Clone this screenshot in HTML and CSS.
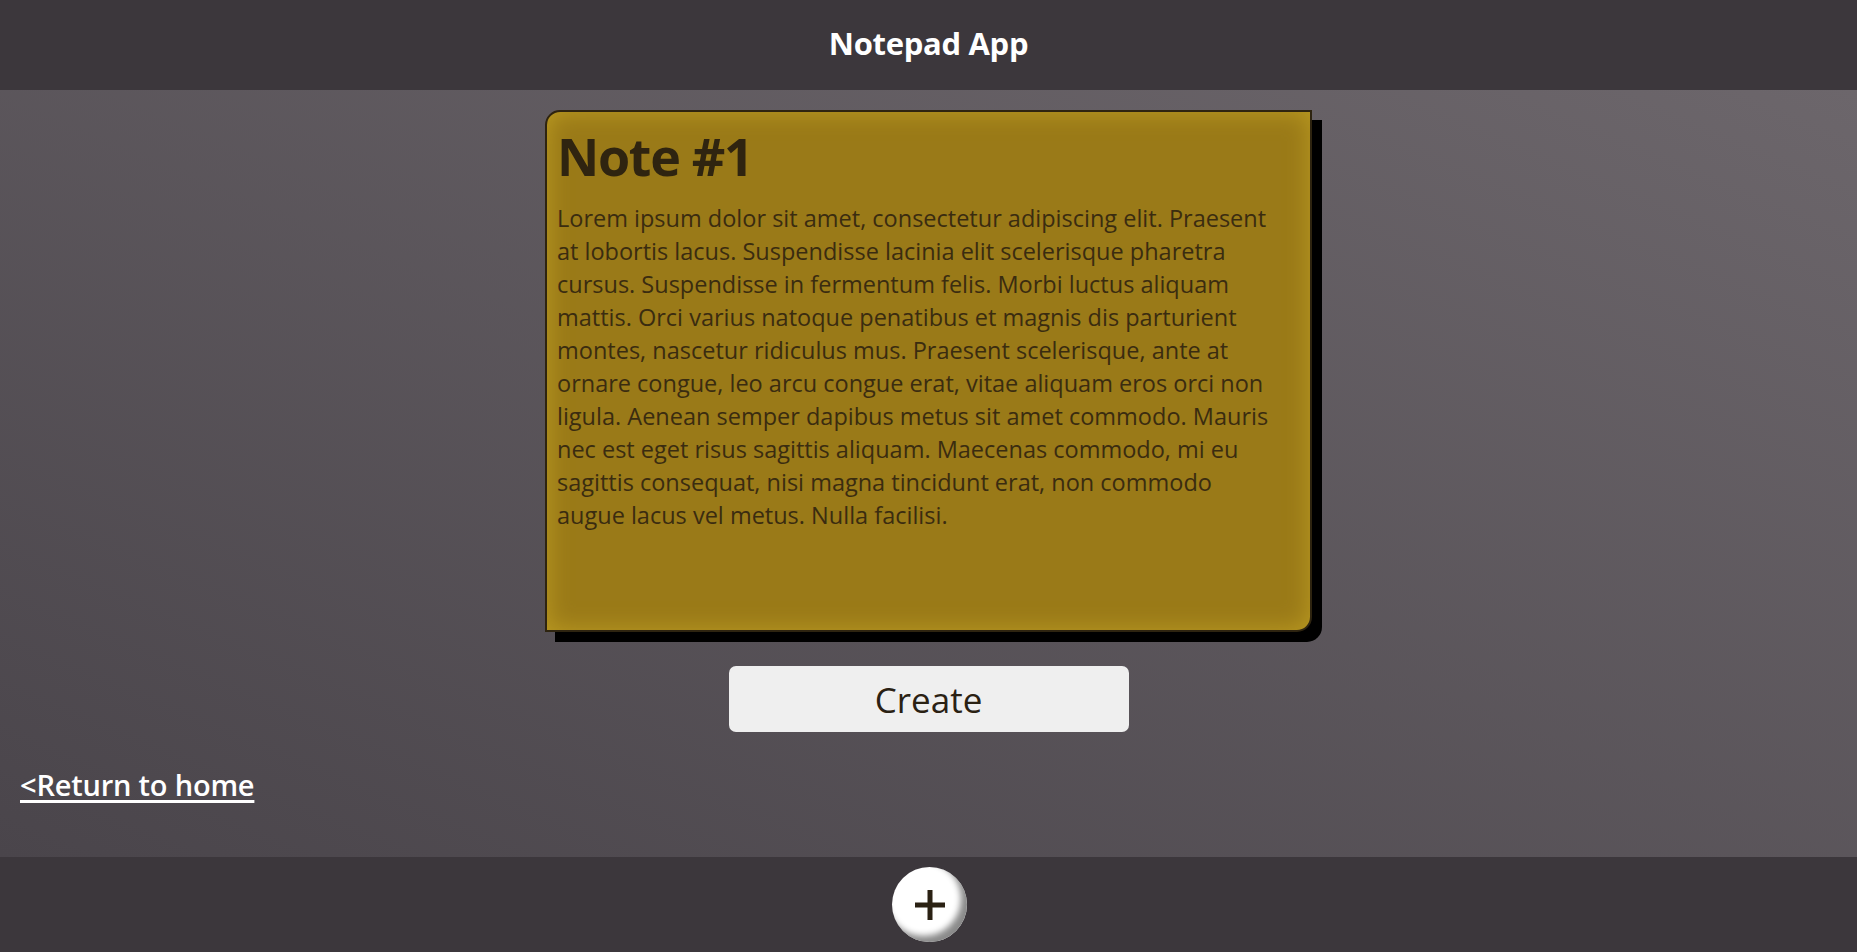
FILE: index.html
```html
<!DOCTYPE html>
<html lang="en">
<head>
<meta charset="utf-8">
<title>Notepad App</title>
<link rel="stylesheet" href="styles.css">
</head>
<body>
<header class="topbar">
  <h1 class="app-title">Notepad App</h1>
</header>
<main class="content">
  <section class="note">
    <h2 class="note-title">Note #1</h2>
    <p class="note-body">Lorem ipsum dolor sit amet, consectetur adipiscing elit. Praesent at lobortis lacus. Suspendisse lacinia elit scelerisque pharetra cursus. Suspendisse in fermentum felis. Morbi luctus aliquam mattis. Orci varius natoque penatibus et magnis dis parturient montes, nascetur ridiculus mus. Praesent scelerisque, ante at ornare congue, leo arcu congue erat, vitae aliquam eros orci non ligula. Aenean semper dapibus metus sit amet commodo. Mauris nec est eget risus sagittis aliquam. Maecenas commodo, mi eu sagittis consequat, nisi magna tincidunt erat, non commodo augue lacus vel metus. Nulla facilisi.</p>
  </section>
  <button class="create-btn" type="button">Create</button>
  <a class="home-link" href="#">&lt;Return to home</a>
</main>
<footer class="bottombar">
  <button class="add-btn" type="button" aria-label="Add note">
    <svg width="34" height="34" viewBox="0 0 34 34" aria-hidden="true">
      <path d="M17 2 V32 M2 17 H32" stroke="#2a2113" stroke-width="5" fill="none"/>
    </svg>
  </button>
</footer>
</body>
</html>
```
FILE: styles.css
```css
* { box-sizing: border-box; }

html, body {
  margin: 0;
  height: 100%;
}

body {
  font-family: "Open Sans", "Noto Sans", sans-serif;
  display: flex;
  flex-direction: column;
  height: 100vh;
  background: #3c373c;
}

.topbar {
  height: 90px;
  flex: 0 0 90px;
  background: #3c373c;
  display: flex;
  align-items: center;
  justify-content: center;
  padding-bottom: 4px;
}

.app-title {
  margin: 0;
  color: #ffffff;
  font-size: 31px;
  font-weight: 700;
  letter-spacing: -0.3px;
}

.content {
  flex: 1 1 auto;
  background: linear-gradient(to top right, #4a454b, #6c666b);
  display: flex;
  flex-direction: column;
  align-items: center;
  padding-top: 20px;
}

.note {
  width: 767px;
  height: 522px;
  border: 2px solid #2e2410;
  border-radius: 15px 0 15px 0;
  background: #9a7a18;
  box-shadow: 10px 10px 0 #000000, inset 0 0 24px #bc9c22;
  padding: 14px 36px 10px 10px;
  color: #33270f;
}

.note-title {
  margin: 0;
  font-size: 52px;
  line-height: 60px;
  font-weight: 700;
  letter-spacing: -1.3px;
  color: #2f2410;
}

.note-body {
  margin: 16px 0 0 0;
  font-size: 23.5px;
  line-height: 33px;
  color: #3a2c10;
}

.create-btn {
  margin-top: 34px;
  width: 400px;
  height: 66px;
  border: none;
  border-radius: 7px;
  background: #efefef;
  color: #2a2113;
  font-family: "Open Sans", "Noto Sans", sans-serif;
  font-size: 35px;
  padding: 0;
  line-height: 1;
}

.home-link {
  align-self: flex-start;
  margin: 33px 0 0 20px;
  color: #ffffff;
  font-size: 29px;
  font-weight: 600;
  letter-spacing: -0.2px;
  text-decoration: underline;
  text-decoration-thickness: 3px;
  text-underline-offset: 4px;
}

.bottombar {
  flex: 0 0 95px;
  height: 95px;
  background: #3c373c;
  display: flex;
  align-items: center;
  justify-content: center;
}

.add-btn {
  width: 75px;
  height: 75px;
  border-radius: 50%;
  border: none;
  background: #ffffff;
  box-shadow: inset -6px -6px 6px #8a8a8a;
  display: flex;
  align-items: center;
  justify-content: center;
  padding: 0;
  margin-left: 2px;
}
```
